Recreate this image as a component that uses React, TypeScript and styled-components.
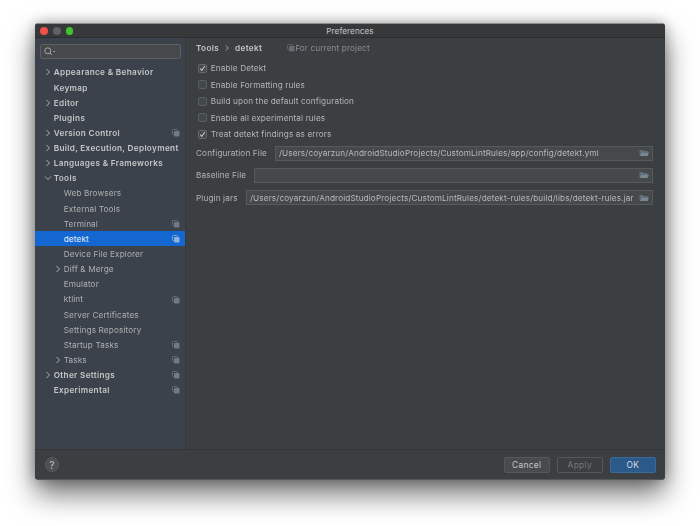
import React from "react";
import styled, { createGlobalStyle } from "styled-components";

const Global = createGlobalStyle`
  html, body { margin: 0; padding: 0; background: #fff; }
  body { width: 700px; height: 526px; overflow: hidden; font-family: Inter, "Liberation Sans", sans-serif; }
`;
const Page = styled.div`
  padding: 23px 35px;
  box-sizing: border-box;
  width: 700px;
  height: 526px;
`;
const Window = styled.div`
  width: 630px;
  height: 457px;
  display: flex;
  flex-direction: column;
  background: #3c3f41;
  border-radius: 4px;
  overflow: hidden;
  box-shadow: 0 14px 28px rgba(0,0,0,.55), 0 0 14px rgba(0,0,0,.3);
  filter: blur(0.3px);
`;
const TitleBar = styled.div`
  height: 15px;
  flex: none;
  box-sizing: border-box;
  position: relative;
  display: flex;
  align-items: center;
  justify-content: center;
  background: #36383a;
  border-top: 1px solid #8d8e8f;
  border-bottom: 1px solid #2b2c2d;
  color: #c4c5c6;
  font-size: 8.2px;
  letter-spacing: .05px;
`;
const Lights = styled.div`
  position: absolute;
  left: 5px;
  top: 2.8px;
  display: flex;
  gap: 5px;
`;
const Light = styled.span<{ $c: string }>`
  width: 7.8px;
  height: 7.8px;
  border-radius: 50%;
  background: ${p => p.$c};
`;
const Body = styled.div`
  flex: 1;
  min-height: 0;
  display: flex;
`;
const Sidebar = styled.div`
  width: 151px;
  flex: none;
  background: #3c424b;
  border-right: 1px solid #36383a;
  box-sizing: border-box;
  padding-top: 6px;
`;
const Search = styled.div`
  margin: 0 5px 5.8px 5px;
  height: 15px;
  box-sizing: border-box;
  width: 141px;
  background: #45494a;
  border: 1px solid #5c6062;
  border-radius: 2px;
  display: flex;
  align-items: center;
  padding-left: 3px;
  color: #a0a2a4;
`;
const Row = styled.div<{ $level: number; $sel?: boolean; $bold?: boolean }>`
  height: 15.15px;
  display: flex;
  align-items: center;
  position: relative;
  box-sizing: border-box;
  padding-left: ${p => (p.$level === 0 ? 18.7 : 28.7)}px;
  background: ${p => (p.$sel ? "#1467d0" : "transparent")};
  color: ${p => (p.$sel ? "#e8eef8" : p.$bold ? "#c4c6c7" : "#aeb0b2")};
  font-size: 8.2px;
  font-weight: ${p => (p.$bold ? 600 : 400)};
  letter-spacing: ${p => (p.$bold ? 0.33 : 0.135)}px;
  white-space: nowrap;
`;
const Arrow = styled.svg`
  position: absolute;
  left: -10px;
  top: 3.5px;
  width: 8px;
  height: 8px;
  fill: none;
  stroke: #b0b2b4;
  stroke-width: 1;
`;
const ArrowWrap = styled.span`
  position: relative;
  width: 0;
  height: 15px;
`;
const ProjectIcon = styled.svg`
  position: absolute;
  right: 5.5px;
  top: 3.6px;
  width: 8px;
  height: 8px;
`;
const Content = styled.div`
  flex: 1;
  min-width: 0;
  box-sizing: border-box;
  padding: 4px 12px 0 10px;
  color: #b3b5b6;
  font-size: 8.2px;
  letter-spacing: .13px;
`;
const Crumb = styled.div`
  height: 12px;
  display: flex;
  align-items: center;
  margin-bottom: 5.8px;
  white-space: nowrap;
`;
const CrumbStrong = styled.span`
  font-weight: 600;
  color: #c4c6c7;
  letter-spacing: .33px;
`;
const CrumbSep = styled.svg`
  width: 5px;
  height: 6px;
  margin: 0 5.5px;
  fill: none;
  stroke: #a5a7a9;
`;
const CrumbNote = styled.span`
  display: flex;
  align-items: center;
  gap: 0;
  margin-left: 25px;
  color: #8b8d8f;
`;
const CheckRow = styled.label`
  height: 16.5px;
  display: flex;
  align-items: center;
  gap: 3.8px;
  padding-left: 2px;
`;
const Box = styled.span<{ $on?: boolean }>`
  width: 9px;
  height: 9px;
  flex: none;
  box-sizing: border-box;
  background: #43494a;
  border: 1px solid ${p => (p.$on ? "#66696b" : "#5a5e60")};
  border-radius: 2px;
  display: flex;
  align-items: center;
  justify-content: center;
`;
const Field = styled.div`
  height: 15px;
  margin-bottom: 7.2px;
  display: flex;
  align-items: center;
  white-space: nowrap;
`;
const Fields = styled.div`
  margin-top: 3.5px;
`;
const FieldLabel = styled.span<{ $w: number }>`
  width: ${p => p.$w}px;
  flex: none;
`;
const Input = styled.div`
  flex: 1;
  min-width: 0;
  height: 15px;
  box-sizing: border-box;
  background: #45494a;
  border: 1px solid #565a5c;
  display: flex;
  align-items: center;
  padding: 0 3px 0 3px;
  color: #b8babb;
  letter-spacing: .13px;
  overflow: hidden;
`;
const InputText = styled.span`
  flex: 1;
  min-width: 0;
  overflow: hidden;
`;
const Footer = styled.div`
  height: 31px;
  flex: none;
  box-sizing: border-box;
  border-top: 1px solid #333537;
  border-bottom: 1px solid #55585a;
  background: #3c3f41;
  display: flex;
  align-items: center;
  padding: 0 9.5px 0 9.5px;
`;
const Help = styled.div`
  width: 14.5px;
  height: 14.5px;
  box-sizing: border-box;
  border-radius: 50%;
  background: #4d5052;
  border: 1px solid #56595b;
  color: #c0c2c3;
  font-size: 10px;
  display: flex;
  align-items: center;
  justify-content: center;
`;
const Spacer = styled.div`
  flex: 1;
`;
const Button = styled.div<{ $kind?: "primary" | "disabled" }>`
  width: 45.5px;
  height: 16px;
  margin-left: 7.5px;
  box-sizing: border-box;
  border-radius: 2px;
  display: flex;
  align-items: center;
  justify-content: center;
  font-size: 8.4px;
  letter-spacing: .3px;
  background: ${p => (p.$kind === "primary" ? "#2b5a8a" : p.$kind === "disabled" ? "#3c3f41" : "#474b4d")};
  border: 1px solid ${p => (p.$kind === "primary" ? "#3a6a9a" : "#55585a")};
  color: ${p => (p.$kind === "primary" ? "#d6dde4" : p.$kind === "disabled" ? "#74777a" : "#c4c6c7")};
`;

const Proj = ({ c = "#6f7a85" }: { c?: string }) => (
  <>
    <rect x="0.5" y="0.5" width="5" height="5" rx="1" fill="none" stroke={c} strokeWidth=".8" />
    <rect x="2" y="2" width="5.5" height="5.5" rx="1" fill={c} />
  </>
);

type Item = { t: string; level: number; bold?: boolean; arrow?: "r" | "d"; proj?: boolean; sel?: boolean };
const items: Item[] = [
  { t: "Appearance & Behavior", level: 0, bold: true, arrow: "r" },
  { t: "Keymap", level: 0, bold: true },
  { t: "Editor", level: 0, bold: true, arrow: "r" },
  { t: "Plugins", level: 0, bold: true },
  { t: "Version Control", level: 0, bold: true, arrow: "r", proj: true },
  { t: "Build, Execution, Deployment", level: 0, bold: true, arrow: "r" },
  { t: "Languages & Frameworks", level: 0, bold: true, arrow: "r" },
  { t: "Tools", level: 0, bold: true, arrow: "d" },
  { t: "Web Browsers", level: 1 },
  { t: "External Tools", level: 1 },
  { t: "Terminal", level: 1, proj: true },
  { t: "detekt", level: 1, proj: true, sel: true },
  { t: "Device File Explorer", level: 1 },
  { t: "Diff & Merge", level: 1, arrow: "r" },
  { t: "Emulator", level: 1 },
  { t: "ktlint", level: 1, proj: true },
  { t: "Server Certificates", level: 1 },
  { t: "Settings Repository", level: 1 },
  { t: "Startup Tasks", level: 1, proj: true },
  { t: "Tasks", level: 1, arrow: "r", proj: true },
  { t: "Other Settings", level: 0, bold: true, arrow: "r", proj: true },
  { t: "Experimental", level: 0, bold: true, proj: true },
];
const checks = [
  { t: "Enable Detekt", on: true },
  { t: "Enable Formatting rules" },
  { t: "Build upon the default configuration" },
  { t: "Enable all experimental rules" },
  { t: "Treat detekt findings as errors", on: true },
];
const fields = [
  { l: "Configuration File", w: 79, v: "/Users/coyarzun/AndroidStudioProjects/CustomLintRules/app/config/detekt.yml" },
  { l: "Baseline File", w: 58, v: "" },
  { l: "Plugin jars", w: 50, v: "/Users/coyarzun/AndroidStudioProjects/CustomLintRules/detekt-rules/build/libs/detekt-rules.jar" },
];

const Folder = () => (
  <svg width="10" height="8" viewBox="0 0 10 8" style={{ flex: "none" }}>
    <path d="M0.5 1h3l1 1h4v1.5H2L0.5 7z" fill="#63707a" />
    <path d="M2.2 3.5H10L8.6 7H0.8z" fill="#7a8790" />
  </svg>
);

export default function App() {
  return (
    <Page>
      <Global />
      <Window>
        <TitleBar>
          <Lights>
            <Light $c="#f4504a" />
            <Light $c="#5f6163" />
            <Light $c="#3fc32f" />
          </Lights>
          Preferences
        </TitleBar>
        <Body>
          <Sidebar>
            <Search>
              <svg width="12" height="9" viewBox="0 0 12 9" fill="none" stroke="#a4a6a8">
                <circle cx="3.8" cy="3.8" r="3" />
                <path d="M6 6l2 2" />
                <path d="M9 4h2.4L10.2 5.4z" fill="#a4a6a8" stroke="none" />
              </svg>
            </Search>
            {items.map(i => (
              <Row key={i.t} $level={i.level} $sel={i.sel} $bold={i.bold}>
                {i.arrow && (
                  <ArrowWrap>
                    <Arrow viewBox="0 0 8 8">
                      {i.arrow === "r" ? <path d="M2.5 1l3 3-3 3" /> : <path d="M1 2.5l3 3 3-3" />}
                    </Arrow>
                  </ArrowWrap>
                )}
                {i.t}
                {i.proj && (
                  <ProjectIcon viewBox="0 0 8 8">
                    <Proj c={i.sel ? "#8fb0dc" : "#6f7a85"} />
                  </ProjectIcon>
                )}
              </Row>
            ))}
          </Sidebar>
          <Content>
            <Crumb>
              <CrumbStrong>Tools</CrumbStrong>
              <CrumbSep viewBox="0 0 5 6"><path d="M1 .7l2.3 2.3L1 5.3" /></CrumbSep>
              <CrumbStrong>detekt</CrumbStrong>
              <CrumbNote>
                <svg width="8" height="8" viewBox="0 0 8 8"><Proj c="#666c72" /></svg>
                For current project
              </CrumbNote>
            </Crumb>
            {checks.map(c => (
              <CheckRow key={c.t}>
                <Box $on={c.on}>
                  {c.on && (
                    <svg width="7" height="7" viewBox="0 0 7 7" fill="none" stroke="#c4c6c7" strokeWidth="1.1">
                      <path d="M1.2 3.6l1.6 1.8L5.8 1" />
                    </svg>
                  )}
                </Box>
                {c.t}
              </CheckRow>
            ))}
            <Fields>
              {fields.map(f => (
                <Field key={f.l}>
                  <FieldLabel $w={f.w}>{f.l}</FieldLabel>
                  <Input>
                    <InputText>{f.v}</InputText>
                    <Folder />
                  </Input>
                </Field>
              ))}
            </Fields>
          </Content>
        </Body>
        <Footer>
          <Help>?</Help>
          <Spacer />
          <Button>Cancel</Button>
          <Button $kind="disabled">Apply</Button>
          <Button $kind="primary">OK</Button>
        </Footer>
      </Window>
    </Page>
  );
}
